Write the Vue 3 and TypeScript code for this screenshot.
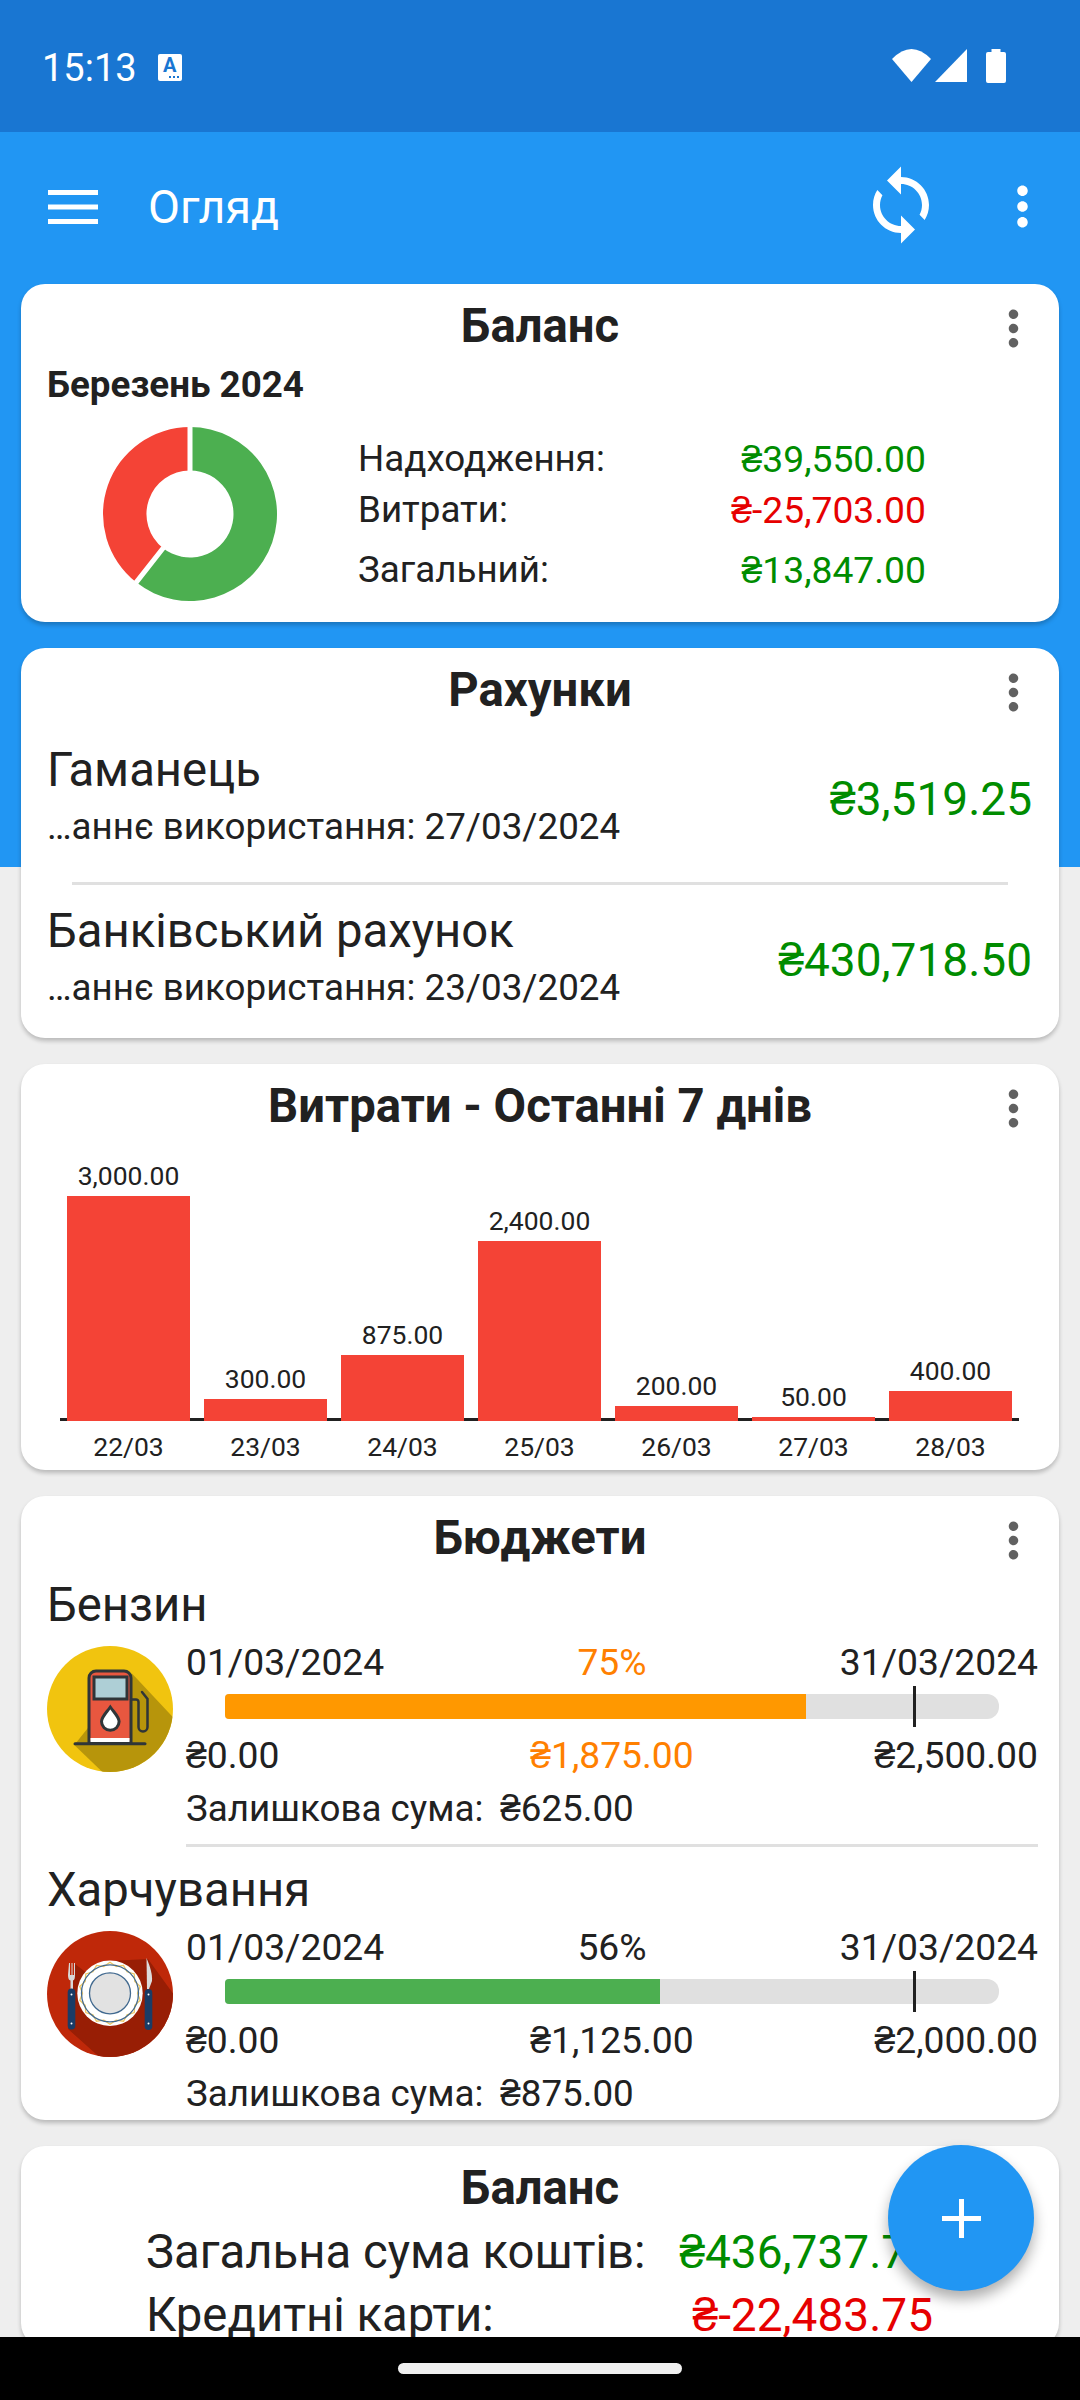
<template>
  <div class="screen">
    <div class="status-bar">
      <span class="clock">15:13</span>
      <div class="a-icon"><span class="a-letter">A</span><i class="a-dots"></i></div>
      <div class="status-right">
        <svg class="wifi" width="39" height="33" viewBox="0 0 39 33"><path d="M0 10Q19.5-10 39 10L19.5 33Z" fill="#fff" /></svg>
        <svg class="cell" width="32" height="33" viewBox="0 0 32 33"><path d="M0 33H32V0Z" fill="#fff" /></svg>
        <svg class="battery" width="20" height="34" viewBox="0 0 20 34"><path d="M5.500 0h9v3H18a2 2 0 0 1 2 2v27a2 2 0 0 1-2 2H2a2 2 0 0 1-2-2V5a2 2 0 0 1 2-2h3.500z" fill="#fff" /></svg>
      </div>
    </div>

    <main class="content">
      <header class="toolbar">
        <svg class="menu" width="50" height="34" viewBox="0 0 50 34">
          <path d="M0 0h50v5H0zM0 14.500h50v5H0zM0 29h50v5H0z" fill="#fff" />
        </svg>
        <span class="toolbar-title">Огляд</span>
        <svg class="sync" width="84" height="84" viewBox="0 0 24 24">
          <path
            fill="#fff"
            d="M12 4V1L8 5l4 4V6c3.310 0 6 2.690 6 6 0 1.010-.25 1.970-.7 2.800l1.460 1.460C19.540 15.030 20 13.570 20 12c0-4.420-3.580-8-8-8zm0 14c-3.310 0-6-2.690-6-6 0-1.010.25-1.970.7-2.800L5.240 7.740C4.460 8.970 4 10.430 4 12c0 4.420 3.580 8 8 8v3l4-4-4-4v3z"
          />
        </svg>
        <svg class="more-white" width="63" height="63" viewBox="0 0 24 24">
          <path fill="#fff" :d="moreIcon" />
        </svg>
      </header>

      <section class="card">
        <div class="card-head">
          <h2 class="card-title">Баланс</h2>
          <svg class="more" width="57" height="57" viewBox="0 0 24 24"><path fill="#616161" :d="moreIcon" /></svg>
        </div>
        <div class="month">Березень 2024</div>
        <div class="balance-body">
          <svg class="donut" width="174" height="174" viewBox="0 0 174 174">
            <path :d="greenArc" fill="#4caf50" />
            <path :d="redArc" fill="#f44336" />
            <path :d="separators" stroke="#fff" stroke-width="5" />
          </svg>
          <div class="balance-rows">
            <div class="balance-row" v-for="row in balanceRows" :key="row.label" :class="row.cls">
              <span>{{ row.label }}</span>
              <span class="balance-value" :class="row.color">{{ row.value }}</span>
            </div>
          </div>
        </div>
      </section>

      <section class="card">
        <div class="card-head">
          <h2 class="card-title">Рахунки</h2>
          <svg class="more" width="57" height="57" viewBox="0 0 24 24"><path fill="#616161" :d="moreIcon" /></svg>
        </div>
        <template v-for="(acc, i) in accounts" :key="acc.name">
          <div class="account-divider" v-if="i > 0"></div>
          <div class="account" :class="{ 'account-first': i === 0 }">
            <div>
              <div class="account-name">{{ acc.name }}</div>
              <div class="account-sub">…аннє використання: {{ acc.date }}</div>
            </div>
            <div class="account-amount green">{{ acc.amount }}</div>
          </div>
        </template>
      </section>

      <section class="card">
        <div class="card-head">
          <h2 class="card-title">Витрати - Останні 7 днів</h2>
          <svg class="more" width="57" height="57" viewBox="0 0 24 24"><path fill="#616161" :d="moreIcon" /></svg>
        </div>
        <div class="chart">
          <div class="plot">
            <div class="plot-col" v-for="d in days" :key="d.day">
              <span class="plot-value">{{ d.value.toLocaleString('en-US', { minimumFractionDigits: 2 }) }}</span>
              <div class="plot-bar" :style="{ height: d.value * 0.075 + 'px' }"></div>
            </div>
          </div>
          <div class="plot-days">
            <span v-for="d in days" :key="d.day">{{ d.day }}</span>
          </div>
        </div>
      </section>

      <section class="card">
        <div class="card-head">
          <h2 class="card-title">Бюджети</h2>
          <svg class="more" width="57" height="57" viewBox="0 0 24 24"><path fill="#616161" :d="moreIcon" /></svg>
        </div>
        <div class="budget" v-for="(b, i) in budgets" :key="b.name">
          <div class="budget-name">{{ b.name }}</div>
          <div class="budget-body">
            <svg v-if="b.icon === 'fuel'" class="budget-icon" width="126" height="126" viewBox="0 0 126 126">
              <defs>
                <clipPath id="fuelClip"><circle cx="63" cy="63" r="63" /></clipPath>
              </defs>
              <circle cx="63" cy="63" r="63" fill="#f1c40f" />
              <path clip-path="url(#fuelClip)" d="M84.700 27.300L140 86V140H70L27.300 99Z" fill="#b7950b" />
              <path d="M42 96V32a7 7 0 0 1 7-7H77a7 7 0 0 1 7 7V96Z" fill="#e8573f" stroke="#2f3538" stroke-width="3" />
              <rect x="47" y="31" width="33" height="22" fill="#aecfd6" stroke="#2f3538" stroke-width="3" />
              <path d="M63.300 61C59 67 54.500 71 54.500 75.500a8.800 8.800 0 0 0 17.600 0C72.100 71 67.600 67 63.300 61Z" fill="#fff" stroke="#2f3538" stroke-width="3" />
              <rect x="43.500" y="92" width="39" height="4" fill="#fff" />
              <path d="M28 97.700H98" stroke="#2f3538" stroke-width="3" stroke-linecap="round" />
              <path d="M84 53.500H89a2.500 2.500 0 0 1 2.500 2.500V81a4.500 4.500 0 0 0 9 0V53L95 46" fill="none" stroke="#2f3538" stroke-width="2.500" stroke-linecap="round" />
            </svg>
            <svg v-else class="budget-icon" width="126" height="126" viewBox="0 0 126 126">
              <defs>
                <clipPath id="plateClip"><circle cx="63" cy="63" r="63" /></clipPath>
              </defs>
              <circle cx="63" cy="63" r="63" fill="#bf2809" />
              <path clip-path="url(#plateClip)" d="M101 28L135 75V140H68L21 98L28 33L45 46L63 30Z" fill="#981e05" />
              <circle cx="63" cy="62.300" r="32.700" fill="#fff" />
              <polygon :points="zigzag" fill="none" stroke="#ecc765" stroke-width="1.300" />
              <circle cx="63" cy="62.300" r="28.500" fill="none" stroke="#41698f" stroke-width="1.300" />
              <circle cx="63" cy="62.300" r="20.500" fill="#e2e2e2" stroke="#41698f" stroke-width="1.300" />
              <path d="M21 32V44Q21 49 23.500 49.500V58H26V49.500Q28 49 28 44V32H27V44H25.500V32H24.500V44H23V32H22V44Z" fill="#d8d8d8" />
              <rect x="20.700" y="57.500" width="7.600" height="41" rx="3.800" fill="#1a3c66" />
              <circle cx="24.500" cy="63.500" r="1" fill="#fff" />
              <circle cx="24.500" cy="92.500" r="1" fill="#fff" />
              <path d="M99.500 27C103 35 105.500 43 105 50L102 58H100Z" fill="#dcdcdc" />
              <rect x="97.700" y="58" width="7.600" height="41" rx="3.800" fill="#1a3c66" />
              <circle cx="101.500" cy="63.500" r="1" fill="#fff" />
              <circle cx="101.500" cy="92.500" r="1" fill="#fff" />
            </svg>
            <div class="budget-info">
              <div class="budget-line budget-dates">
                <span>01/03/2024</span>
                <span :class="b.warn ? 'orange' : ''">{{ b.percent }}%</span>
                <span>31/03/2024</span>
              </div>
              <div class="progress-wrap">
                <div class="progress">
                  <div class="progress-fill" :class="b.warn ? 'fill-orange' : 'fill-green'" :style="{ width: b.spentRatio * 100 + '%' }"></div>
                  <div class="progress-tick"></div>
                </div>
              </div>
              <div class="budget-line budget-amounts">
                <span>₴0.00</span>
                <span :class="b.warn ? 'orange' : ''">{{ b.spent }}</span>
                <span>{{ b.total }}</span>
              </div>
              <div class="budget-rest">
                <span>Залишкова сума:</span>
                <span>{{ b.rest }}</span>
              </div>
              <div class="budget-divider" v-if="i < budgets.length - 1"></div>
            </div>
          </div>
        </div>
      </section>

      <section class="card">
        <div class="card-head card-head-short">
          <h2 class="card-title">Баланс</h2>
        </div>
        <div class="total-row" v-for="row in totals" :key="row.label">
          <span>{{ row.label }}</span>
          <span class="total-value" :class="row.color">{{ row.value }}</span>
        </div>
      </section>
    </main>

    <button class="fab" type="button">
      <svg width="39" height="39" viewBox="0 0 39 39"><path d="M17 0h5v17h17v5H22v17h-5V22H0v-5h17z" fill="#fff" /></svg>
    </button>

    <div class="nav-bar"><div class="nav-handle"></div></div>
  </div>
</template>

<script setup lang="ts">
import { computed } from 'vue'

const moreIcon =
  'M12 8c1.100 0 2-.9 2-2s-.9-2-2-2-2 .9-2 2 .9 2 2 2zm0 2c-1.100 0-2 .9-2 2s.9 2 2 2 2-.9 2-2-.9-2-2-2zm0 6c-1.100 0-2 .9-2 2s.9 2 2 2 2-.9 2-2-.9-2-2-2z'

const balanceRows = [
  { label: 'Надходження:', value: '₴39,550.00', color: 'green', cls: '' },
  { label: 'Витрати:', value: '₴-25,703.00', color: 'red', cls: 'row-tight' },
  { label: 'Загальний:', value: '₴13,847.00', color: 'green', cls: 'row-last' },
]

const accounts = [
  { name: 'Гаманець', date: '27/03/2024', amount: '₴3,519.25' },
  { name: 'Банківський рахунок', date: '23/03/2024', amount: '₴430,718.50' },
]

const days = [
  { day: '22/03', value: 3000 },
  { day: '23/03', value: 300 },
  { day: '24/03', value: 875 },
  { day: '25/03', value: 2400 },
  { day: '26/03', value: 200 },
  { day: '27/03', value: 50 },
  { day: '28/03', value: 400 },
]

const budgets = [
  { name: 'Бензин', icon: 'fuel', percent: 75, spentRatio: 0.75, warn: true, spent: '₴1,875.00', total: '₴2,500.00', rest: '₴625.00' },
  { name: 'Харчування', icon: 'plate', percent: 56, spentRatio: 0.5625, warn: false, spent: '₴1,125.00', total: '₴2,000.00', rest: '₴875.00' },
]

const totals = [
  { label: 'Загальна сума коштів:', value: '₴436,737.75', color: 'green' },
  { label: 'Кредитні карти:', value: '₴-22,483.75', color: 'red' },
]

const pt = (rad: number, deg: number) => {
  const a = (deg * Math.PI) / 180
  return `${(87 + rad * Math.sin(a)).toFixed(2)} ${(87 - rad * Math.cos(a)).toFixed(2)}`
}

// donut slices, angles clockwise from 12 o'clock
function slice(from: number, to: number) {
  const R = 87
  const r = 43.5
  const large = to - from > 180 ? 1 : 0
  return `M${pt(R, from)}A${R} ${R} 0 ${large} 1 ${pt(R, to)}L${pt(r, to)}A${r} ${r} 0 ${large} 0 ${pt(r, from)}Z`
}

const greenAngle = (39550 / (39550 + 25703)) * 360
const greenArc = computed(() => slice(0, greenAngle))
const redArc = computed(() => slice(greenAngle, 360))
const separators = computed(() => `M${pt(88, 0)}L${pt(43, 0)}M${pt(88, greenAngle)}L${pt(43, greenAngle)}`)

// yellow ring on the plate
const zigzag = computed(() => {
  const pts: string[] = []
  for (let i = 0; i < 28; i++) {
    const a = (i * Math.PI) / 14
    const rad = i % 2 ? 31 : 27.5
    pts.push(`${(63 + rad * Math.cos(a)).toFixed(1)},${(62.3 + rad * Math.sin(a)).toFixed(1)}`)
  }
  return pts.join(' ')
})
</script>

<style>
html,
body {
  margin: 0;
  background: #eeeeee;
}
</style>

<style scoped>
.screen {
  position: relative;
  width: 1080px;
  height: 2400px;
  overflow: hidden;
  display: flex;
  flex-direction: column;
  font-family: Roboto, sans-serif;
  color: #212121;
}

.status-bar {
  height: 132px;
  flex: none;
  box-sizing: border-box;
  padding: 2px 74px 0 42px;
  background: #1976d2;
  display: flex;
  align-items: center;
  color: #fff;
}

.clock {
  font-size: 38px;
  line-height: 44px;
  margin-top: 2px;
}

.a-icon {
  width: 24px;
  height: 27px;
  margin-left: 21px;
  background: #fff;
  border-radius: 2px;
  position: relative;
  display: flex;
  justify-content: center;
}

.a-letter {
  font-size: 20px;
  line-height: 22px;
  font-weight: 700;
  color: #1976d2;
}

.a-dots {
  position: absolute;
  right: 3px;
  bottom: 3px;
  width: 2px;
  height: 2px;
  background: #1976d2;
  box-shadow: -4px 0 0 #1976d2, -8px 0 0 #1976d2;
}

.status-right {
  margin-left: auto;
  display: flex;
  align-items: flex-start;
  margin-top: -2px;
}

.cell {
  margin-left: 4px;
}

.battery {
  margin-left: 19px;
}

.content {
  flex: 1;
  min-height: 0;
  overflow: hidden;
  background: linear-gradient(#2196f3 0 735px, #eeeeee 735px);
  display: flex;
  flex-direction: column;
  align-items: center;
}

.toolbar {
  width: 100%;
  height: 152px;
  flex: none;
  box-sizing: border-box;
  padding: 0 26px 2px 48px;
  display: flex;
  align-items: center;
}

.toolbar-title {
  margin-left: 50px;
  font-size: 46.500px;
  line-height: 56px;
  color: #fff;
}

.sync {
  margin-left: auto;
  margin-top: -4px;
}

.more-white {
  margin-left: 48px;
  margin-top: -2px;
}

.card {
  width: 1038px;
  flex: none;
  box-sizing: border-box;
  background: #fff;
  border-radius: 24px;
  box-shadow: 0 3px 4px rgba(0, 0, 0, 0.22);
  margin-bottom: 26px;
}

.card-head {
  height: 82px;
  display: grid;
  grid-template-columns: 1fr auto 1fr;
}

.card-head-short {
  height: 75px;
}

.card-title {
  grid-column: 2;
  margin: 0;
  font-size: 47.250px;
  line-height: 84px;
  font-weight: 700;
  white-space: nowrap;
}

.more {
  grid-column: 3;
  justify-self: end;
  margin: 16px 17px 0 0;
}

.month {
  height: 36px;
  padding-left: 26px;
  font-size: 36.750px;
  line-height: 38px;
  font-weight: 700;
}

.balance-body {
  display: flex;
  padding: 25px 0 20px 82px;
}

.balance-rows {
  margin-left: 81px;
  width: 568px;
  padding-top: 6px;
}

.balance-row {
  display: flex;
  justify-content: space-between;
  height: 52px;
  font-size: 36.750px;
  line-height: 52px;
}

.balance-value {
  font-size: 37.250px;
}

.row-tight {
  height: 50px;
  line-height: 50px;
}

.row-last {
  height: 64px;
  margin-top: 3px;
  line-height: 64px;
}

.green {
  color: #008c00;
}

.red {
  color: #e60000;
}

.orange {
  color: #ff8000;
}

.account {
  display: flex;
  align-items: center;
  justify-content: space-between;
  padding: 0 27px 24px 26px;
}

.account-first {
  padding-top: 13px;
  padding-bottom: 29px;
}

.account-name {
  height: 58px;
  font-size: 47.250px;
  line-height: 55px;
}

.account-sub {
  font-size: 36.750px;
  line-height: 52px;
}

.account-amount {
  font-size: 46px;
  line-height: 56px;
  margin-top: 2px;
}

.account-divider {
  height: 3px;
  margin: 0 51px 19px;
  background: #e0e0e0;
}

.plot {
  height: 275px;
  margin: 0 40px 0 39px;
  display: grid;
  grid-template-columns: repeat(7, 1fr);
  background: linear-gradient(#212121, #212121) bottom / 100% 3px no-repeat;
}

.plot-col {
  display: flex;
  flex-direction: column;
  justify-content: flex-end;
  align-items: center;
}

.plot-value {
  font-size: 26.500px;
  line-height: 40px;
}

.plot-bar {
  width: 123px;
  background: #f44336;
}

.plot-days {
  height: 49px;
  margin: 0 40px 0 39px;
  display: grid;
  grid-template-columns: repeat(7, 1fr);
  text-align: center;
  font-size: 26.500px;
  line-height: 52px;
}

.budget-name {
  height: 58px;
  padding-left: 26px;
  font-size: 47.250px;
  line-height: 55px;
}

.budget-body {
  display: flex;
  padding: 0 21px 0 26px;
}

.budget-icon {
  flex: none;
  margin-top: 10px;
}

.budget-info {
  flex: 1;
  margin-left: 13px;
  min-width: 0;
}

.budget-line {
  display: grid;
  grid-template-columns: 1fr auto 1fr;
  font-size: 37.250px;
}

.budget-line span:last-child {
  text-align: right;
}

.budget-dates {
  height: 52px;
  line-height: 52px;
}

.budget-amounts {
  height: 56px;
  line-height: 56px;
}

.progress-wrap {
  height: 39px;
  padding: 6px 39px 0;
  box-sizing: border-box;
}

.progress {
  position: relative;
  height: 25px;
  background: #e0e0e0;
  border-radius: 4px 12px 12px 4px;
}

.progress-fill {
  height: 100%;
  border-radius: 4px 0 0 4px;
}

.fill-orange {
  background: #ff9800;
}

.fill-green {
  background: #4caf50;
}

.progress-tick {
  position: absolute;
  left: 688px;
  top: -8px;
  width: 3px;
  height: 41px;
  background: #212121;
}

.budget-rest {
  display: flex;
  gap: 17px;
  height: 52px;
  font-size: 36.750px;
  line-height: 52px;
}

.budget-divider {
  height: 3px;
  margin: 9px 0 16px;
  background: #e0e0e0;
}

.total-row {
  display: flex;
  justify-content: space-between;
  margin: 0 126px 0 125px;
  height: 63px;
  font-size: 47.250px;
  line-height: 63px;
}

.total-value {
  font-size: 46px;
}

.fab {
  position: absolute;
  left: 888px;
  top: 2145px;
  width: 146px;
  height: 146px;
  padding: 0;
  border: none;
  border-radius: 50%;
  background: #2196f3;
  box-shadow: 0 8px 14px rgba(0, 0, 0, 0.32);
  display: flex;
  align-items: center;
  justify-content: center;
}

.nav-bar {
  height: 63px;
  flex: none;
  background: #000;
  display: flex;
  justify-content: center;
  padding-top: 26px;
  box-sizing: border-box;
}

.nav-handle {
  width: 284px;
  height: 11px;
  border-radius: 6px;
  background: #f0f0f0;
}
</style>
